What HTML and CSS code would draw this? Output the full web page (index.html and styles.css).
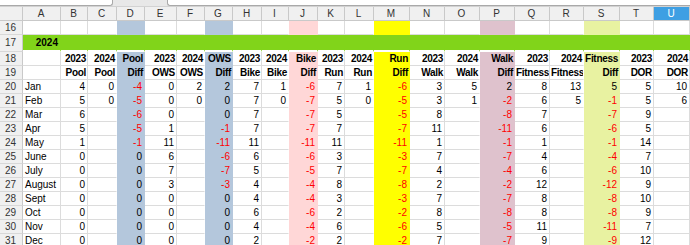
FILE: index.html
```html
<!DOCTYPE html>
<html lang="en">
<head>
    <meta charset="UTF-8">
    <meta name="viewport" content="width=device-width, initial-scale=1.0">
    <title>Activity 2024</title>
    <link rel="stylesheet" href="styles.css">
</head>
<body>
    <!-- bottom edge of the formula bar -->
    <div class="formula-edge">
        <div class="namebox"></div>
        <div class="inputbox"></div>
    </div>

    <table class="sheet">
        <colgroup>
            <col class="w23"><col class="w38"><col class="w27"><col class="w29"><col class="w28"><col class="w32">
            <col class="w28"><col class="w28"><col class="w29"><col class="w27"><col class="w29"><col class="w27">
            <col class="w29"><col class="w36"><col class="w35"><col class="w35"><col class="w35"><col class="w35">
            <col class="w34"><col class="w36"><col class="w34"><col class="w36">
        </colgroup>
        <tr class="colhead">
            <th></th><th>A</th><th>B</th><th>C</th><th>D</th><th>E</th><th>F</th><th>G</th><th>H</th><th>I</th><th>J</th>
            <th>K</th><th>L</th><th>M</th><th>N</th><th>O</th><th>P</th><th>Q</th><th>R</th><th>S</th><th>T</th><th class="sel">U</th>
        </tr>
        <tr>
            <th>16</th><td></td><td></td><td></td><td></td><td></td><td></td><td></td><td></td><td></td><td></td>
            <td></td><td></td><td></td><td></td><td></td><td></td><td></td><td></td><td></td><td></td><td></td>
        </tr>
        <tr class="year">
            <th>17</th><td>2024</td><td></td><td></td><td></td><td></td><td></td><td></td><td></td><td></td><td></td>
            <td></td><td></td><td></td><td></td><td></td><td></td><td></td><td></td><td></td><td></td><td></td>
        </tr>
        <tr class="titles">
            <th>18</th><td></td><td>2023</td><td>2024</td><td>Pool</td><td>2023</td><td>2024</td><td>OWS</td><td>2023</td><td>2024</td><td>Bike</td>
            <td>2023</td><td>2024</td><td>Run</td><td>2023</td><td>2024</td><td>Walk</td><td>2023</td><td>2024</td><td>Fitness</td><td>2023</td><td>2024</td>
        </tr>
        <tr class="titles">
            <th>19</th><td></td><td>Pool</td><td>Pool</td><td>Diff</td><td>OWS</td><td>OWS</td><td>Diff</td><td>Bike</td><td>Bike</td><td>Diff</td>
            <td>Run</td><td>Run</td><td>Diff</td><td>Walk</td><td>Walk</td><td>Diff</td><td>Fitness</td><td>Fitness</td><td>Diff</td>
            <td><span class="spell">DOR</span></td><td><span class="spell">DOR</span></td>
        </tr>
        <tr>
            <th>20</th><td class="lbl">Jan</td><td>4</td><td>0</td><td class="neg">-4</td><td>0</td><td>2</td><td>2</td><td>7</td><td>1</td><td class="neg">-6</td>
            <td>7</td><td>1</td><td class="neg">-6</td><td>3</td><td>5</td><td>2</td><td>8</td><td>13</td><td>5</td><td>5</td><td>10</td>
        </tr>
        <tr>
            <th>21</th><td class="lbl">Feb</td><td>5</td><td>0</td><td class="neg">-5</td><td>0</td><td>0</td><td>0</td><td>7</td><td>0</td><td class="neg">-7</td>
            <td>5</td><td>0</td><td class="neg">-5</td><td>3</td><td>1</td><td class="neg">-2</td><td>6</td><td>5</td><td class="neg">-1</td><td>5</td><td>6</td>
        </tr>
        <tr>
            <th>22</th><td class="lbl">Mar</td><td>6</td><td></td><td class="neg">-6</td><td>0</td><td></td><td>0</td><td>7</td><td></td><td class="neg">-7</td>
            <td>5</td><td></td><td class="neg">-5</td><td>8</td><td></td><td class="neg">-8</td><td>7</td><td></td><td class="neg">-7</td><td>9</td><td></td>
        </tr>
        <tr>
            <th>23</th><td class="lbl">Apr</td><td>5</td><td></td><td class="neg">-5</td><td>1</td><td></td><td class="neg">-1</td><td>7</td><td></td><td class="neg">-7</td>
            <td>7</td><td></td><td class="neg">-7</td><td>11</td><td></td><td class="neg">-11</td><td>6</td><td></td><td class="neg">-6</td><td>5</td><td></td>
        </tr>
        <tr>
            <th>24</th><td class="lbl">May</td><td>1</td><td></td><td class="neg">-1</td><td>11</td><td></td><td class="neg">-11</td><td>11</td><td></td><td class="neg">-11</td>
            <td>11</td><td></td><td class="neg">-11</td><td>1</td><td></td><td class="neg">-1</td><td>1</td><td></td><td class="neg">-1</td><td>14</td><td></td>
        </tr>
        <tr>
            <th>25</th><td class="lbl">June</td><td>0</td><td></td><td>0</td><td>6</td><td></td><td class="neg">-6</td><td>6</td><td></td><td class="neg">-6</td>
            <td>3</td><td></td><td class="neg">-3</td><td>7</td><td></td><td class="neg">-7</td><td>4</td><td></td><td class="neg">-4</td><td>7</td><td></td>
        </tr>
        <tr>
            <th>26</th><td class="lbl">July</td><td>0</td><td></td><td>0</td><td>7</td><td></td><td class="neg">-7</td><td>5</td><td></td><td class="neg">-5</td>
            <td>7</td><td></td><td class="neg">-7</td><td>4</td><td></td><td class="neg">-4</td><td>6</td><td></td><td class="neg">-6</td><td>10</td><td></td>
        </tr>
        <tr>
            <th>27</th><td class="lbl">August</td><td>0</td><td></td><td>0</td><td>3</td><td></td><td class="neg">-3</td><td>4</td><td></td><td class="neg">-4</td>
            <td>8</td><td></td><td class="neg">-8</td><td>2</td><td></td><td class="neg">-2</td><td>12</td><td></td><td class="neg">-12</td><td>9</td><td></td>
        </tr>
        <tr>
            <th>28</th><td class="lbl">Sept</td><td>0</td><td></td><td>0</td><td>0</td><td></td><td>0</td><td>4</td><td></td><td class="neg">-4</td>
            <td>3</td><td></td><td class="neg">-3</td><td>7</td><td></td><td class="neg">-7</td><td>8</td><td></td><td class="neg">-8</td><td>10</td><td></td>
        </tr>
        <tr>
            <th>29</th><td class="lbl">Oct</td><td>0</td><td></td><td>0</td><td>0</td><td></td><td>0</td><td>6</td><td></td><td class="neg">-6</td>
            <td>2</td><td></td><td class="neg">-2</td><td>8</td><td></td><td class="neg">-8</td><td>8</td><td></td><td class="neg">-8</td><td>9</td><td></td>
        </tr>
        <tr>
            <th>30</th><td class="lbl">Nov</td><td>0</td><td></td><td>0</td><td>0</td><td></td><td>0</td><td>4</td><td></td><td class="neg">-4</td>
            <td>6</td><td></td><td class="neg">-6</td><td>5</td><td></td><td class="neg">-5</td><td>11</td><td></td><td class="neg">-11</td><td>7</td><td></td>
        </tr>
        <tr>
            <th>31</th><td class="lbl">Dec</td><td>0</td><td></td><td>0</td><td>0</td><td></td><td>0</td><td>2</td><td></td><td class="neg">-2</td>
            <td>2</td><td></td><td class="neg">-2</td><td>7</td><td></td><td class="neg">-7</td><td>9</td><td></td><td class="neg">-9</td><td>12</td><td></td>
        </tr>
    </table>
</body>
</html>
```

FILE: styles.css
```css
body {
    margin: 0;
    background: #ffffff;
    font-family: 'Liberation Sans', Arial, sans-serif;
    overflow: hidden;
}

/* formula bar edge at the very top */
.formula-edge {
    display: flex;
    height: 6px;
    background: #e8e8e8;
    border-bottom: 1px solid #d2d2d2;
}

.namebox {
    width: 112px;
    background: #ffffff;
    border-right: 1px solid #a9a9a9;
    border-bottom: 1px solid #a9a9a9;
    border-bottom-right-radius: 3px;
}

.inputbox {
    flex: 1;
    margin-left: 54px;
    background: #ffffff;
    border-left: 1px solid #a9a9a9;
    border-bottom: 1px solid #a9a9a9;
    border-bottom-left-radius: 3px;
}

/* grid */
.sheet {
    table-layout: fixed;
    width: 690px;
    border-collapse: separate;
    border-spacing: 0;
    font-size: 10px;
    color: #000000;
}

.w23 { width: 23px; }
.w27 { width: 27px; }
.w28 { width: 28px; }
.w29 { width: 29px; }
.w32 { width: 32px; }
.w34 { width: 34px; }
.w35 { width: 35px; }
.w36 { width: 36px; }
.w38 { width: 38px; }

.sheet tr {
    height: 14px;
}

.sheet td,
.sheet th {
    padding: 0 2px 0 1px;
    line-height: 12px;
    white-space: nowrap;
    overflow: hidden;
    box-sizing: border-box;
}

.sheet td {
    text-align: right;
    border-right: 1px solid #dcdcdc;
    border-bottom: 1px solid #dcdcdc;
}

.sheet th {
    font-weight: normal;
    text-align: center;
    color: #333333;
    background: #f0f0f0;
    border-right: 1px solid #c9c9c9;
    border-bottom: 1px solid #d8d8d8;
}

.colhead th {
    border-bottom: 1px solid #c9c9c9;
}

.colhead th.sel {
    background: #3e9fe3;
    color: #ffffff;
}

/* filled "Diff" columns: no grid drawn over them */
.sheet td:nth-child(4),
.sheet td:nth-child(7),
.sheet td:nth-child(10),
.sheet td:nth-child(13),
.sheet td:nth-child(16),
.sheet td:nth-child(19) {
    border-right-color: transparent;
}

.sheet td:nth-child(5),
.sheet td:nth-child(8),
.sheet td:nth-child(11),
.sheet td:nth-child(14),
.sheet td:nth-child(17),
.sheet td:nth-child(20) {
    border-right-color: transparent;
    border-bottom-color: transparent;
}

.sheet td:nth-child(5),
.sheet td:nth-child(8) { background: #b4c7dc; }
.sheet td:nth-child(11) { background: #ffd7d7; }
.sheet td:nth-child(14) { background: #ffff00; }
.sheet td:nth-child(17) { background: #dfc2cd; }
.sheet td:nth-child(20) { background: #e8f2a1; }

.sheet tr.year {
    height: 17px;
}

.sheet .year td {
    background: #81d41a;
    border-right-color: transparent;
    border-bottom: 2px solid #ffffff;
    font-weight: bold;
}

.sheet .titles td {
    font-weight: bold;
    letter-spacing: -0.3px;
    padding-right: 1px;
}

.sheet td.lbl {
    text-align: left;
    padding-left: 2px;
}

.neg {
    color: #ff0000;
}

.spell {
    text-decoration: underline wavy #e01b1b;
    text-decoration-thickness: 1px;
    text-underline-offset: 2px;
}
```
